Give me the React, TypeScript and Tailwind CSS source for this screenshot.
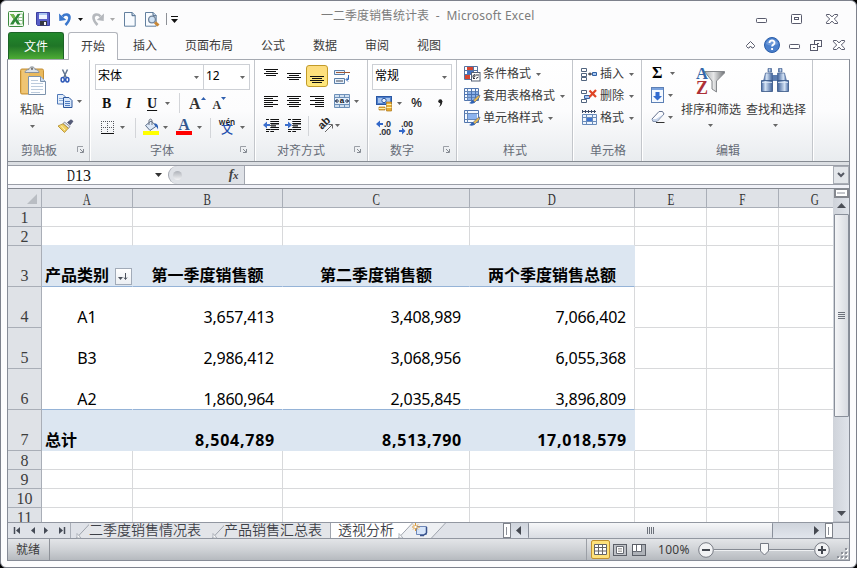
import React from "react";

const UI = "font-['Noto_Sans','Noto_Sans_CJK_SC',sans-serif]";
const SERIF = "font-['Liberation_Serif','Noto_Sans_CJK_SC',serif]";

type P = { className?: string };

function Svg({ w, h, className = "", children }: { w: number; h: number; className?: string; children: React.ReactNode }) {
  return (
    <svg width={w} height={h} viewBox={`0 0 ${w} ${h}`} fill="none" className={`block shrink-0 overflow-visible ${className}`}>
      {children}
    </svg>
  );
}

function Caret({ className = "", color = "#666" }: P & { color?: string }) {
  return (
    <Svg w={5} h={3} className={className}>
      <path d="M0 0h5L2.5 3z" fill={color} />
    </Svg>
  );
}

function Lines({ rows, w = 14, h = 14, className = "" }: P & { rows: [number, number, number][]; w?: number; h?: number }) {
  return (
    <Svg w={w} h={h} className={className}>
      {rows.map(([x, y, len], i) => (
        <rect key={i} x={x} y={y} width={len} height={1} fill="#111" />
      ))}
    </Svg>
  );
}

function Sep({ className = "" }: P) {
  return <div className={`h-[20px] w-px shrink-0 bg-[#d3d5d9] ${className}`} />;
}

function Launcher() {
  return (
    <Svg w={8} h={8}>
      <path d="M.5 6V.5H6" stroke="#9b9fa6" />
      <path d="M3 3l3 3M6.5 3v3.5H3" stroke="#858a92" />
    </Svg>
  );
}

function Group({ width, label, pad, launcher, children }: { width: string; label: string; pad: string; launcher?: string; children: React.ReactNode }) {
  return (
    <div className={`flex h-full shrink-0 flex-col border-r border-[#c3c6cb] pt-[4px] shadow-[1px_0_0_#fff] ${width}`}>
      <div className="h-[75px]">{children}</div>
      <div className={`flex h-[22px] items-center text-[12px] leading-[22px] text-[#666c77] ${pad}`}>
        <span className="mt-px shrink-0 whitespace-nowrap">{label}</span>
        {launcher && (
          <span className={launcher}>
            <Launcher />
          </span>
        )}
      </div>
    </div>
  );
}

/* ---------- quick access icons ---------- */

function ExcelLogo() {
  return (
    <Svg w={17} h={17} className="ml-[7px]">
      <rect x=".5" y=".5" width="15" height="15" rx="1" fill="#f4faf1" stroke="#3c8a3f" />
      <path d="M10.500 3h4v10h-4z" fill="#fff" stroke="#8fbf8a" strokeWidth=".8" />
      <path d="M10.500 6.500h4M10.500 9.500h4" stroke="#8fbf8a" />
      <path d="M2 3h3.500l2 3.300L9.500 3h3L9 8l3.500 5.500H9.300l-2-3.300-2 3.300H2l3.500-5.500z" fill="#2d8836" />
      <path d="M2 3h3.500l2 3.300-1.900 1.900z" fill="#73b84f" />
    </Svg>
  );
}

function Floppy() {
  return (
    <Svg w={14} h={14} className="ml-[7px]">
      <path d="M.5.5h13v13h-12l-1-1z" fill="#5a5fc8" stroke="#3b3f9e" />
      <path d="M3 1h8v6H3z" fill="#eef3ff" />
      <path d="M3 1h8v2H3z" fill="#a9c4f0" />
      <path d="M4 9h7v4.500H4z" fill="#35373f" />
      <path d="M8 10h2v3H8z" fill="#f2f2f5" />
    </Svg>
  );
}

function Undo({ color, flip, className = "" }: P & { color: string; flip?: boolean }) {
  return (
    <Svg w={13} h={14} className={`${flip ? "-scale-x-100" : ""} ${className}`}>
      <path d="M3.500 4.500C6 1.500 10.800 2 10.500 6c-.2 3-1.500 4.500-4 7" stroke={color} strokeWidth="2.600" />
      <path d="M0 1.500l.3 7.500 7-1z" fill={color} />
    </Svg>
  );
}

function Page({ lens, className = "" }: P & { lens?: boolean }) {
  return (
    <Svg w={16} h={15} className={className}>
      <path d="M.5.5h7.700l3 3v10.700H.5z" fill="#f8fbff" stroke="#63809f" />
      <path d="M8 .5v3.200h3.300" fill="#c5d7ea" stroke="#4a6888" />
      {lens && (
        <>
          <circle cx="7" cy="7.500" r="3.400" fill="#cfe2f5" stroke="#71849b" strokeWidth="1.300" />
          <path d="M10 10.300l3.500 3.200" stroke="#c98735" strokeWidth="3" />
        </>
      )}
    </Svg>
  );
}

/* ---------- window controls ---------- */

function MinIcon({ className = "" }: P) {
  return (
    <Svg w={11} h={5} className={className}>
      <rect x=".5" y=".5" width="10" height="4" rx=".8" fill="#fff" stroke="#585a6c" />
    </Svg>
  );
}

function CloseIcon({ className = "" }: P) {
  return (
    <Svg w={12} h={10} className={className}>
      <path d="M.5.5h3L6 2.800 8.500.5h3v1.300L8.300 5l3.200 3.200v1.300h-3L6 7.200 3.500 9.500h-3V8.200L3.700 5 .5 1.800z" fill="#fff" stroke="#585a6c" />
    </Svg>
  );
}

/* ---------- ribbon icons ---------- */

function PasteIcon() {
  return (
    <Svg w={27} h={31} className="ml-[12px]">
      <rect x=".5" y="4" width="23" height="25" rx="1.500" fill="#e9b95d" stroke="#c48f35" />
      <path d="M2 5h7v23H2z" fill="#f3cd83" opacity=".6" />
      <path d="M5 7.500c0-2 2-3 4-3C9 1 15 1 15 4.500c2 0 4 1 4 3z" fill="#dce2e8" stroke="#8a929c" />
      <circle cx="12" cy="3.700" r="1.200" fill="#777" />
      <path d="M8.500 11.500h12l5 5v13h-17z" fill="#fdfeff" stroke="#7d93ad" />
      <path d="M20.500 11.500v5h5" fill="#cadaea" stroke="#7d93ad" />
      <path d="M11 15.500h7M11 18.500h12M11 21.500h12M11 24.500h12M11 27.500h9" stroke="#bccbdc" />
    </Svg>
  );
}

function CutIcon() {
  return (
    <Svg w={11} h={14}>
      <path d="M2.500.5L6.500 9M7.500.5L3.500 9" stroke="#60748f" strokeWidth="1.500" />
      <ellipse cx="2.700" cy="10.700" rx="1.600" ry="2.200" stroke="#2e59b8" strokeWidth="1.500" />
      <ellipse cx="7.300" cy="10.700" rx="1.600" ry="2.200" stroke="#2e59b8" strokeWidth="1.500" />
    </Svg>
  );
}

function CopyIcon() {
  return (
    <Svg w={16} h={14}>
      <path d="M.5.5H6l2.500 2.500v7h-8z" fill="#e5effb" stroke="#4f78b8" />
      <path d="M2 4.500h4M2 6.500h4" stroke="#87a8d6" />
      <path d="M6.500 3.500H12L15 6.500v7H6.500z" fill="#d8e7fa" stroke="#2b559b" />
      <path d="M8 7.500h5M8 9.500h5M8 11.500h5" stroke="#4f7cc1" />
    </Svg>
  );
}

function BrushIcon() {
  return (
    <Svg w={17} h={14}>
      <path d="M10.500 3.500L14 .8l2 1.500-2.800 3.500z" fill="#555c79" stroke="#3c4260" strokeWidth=".7" />
      <path d="M7.500 3l5.500 4.500-1.500 1.800L6 4.800z" fill="#e1e2e8" stroke="#777b88" strokeWidth=".8" />
      <path d="M6 4.800l5.300 4.400L7.500 13.500 1 7z" fill="#f0cf63" stroke="#b08a25" strokeWidth=".8" />
      <path d="M4 6.500l4 4.500" stroke="#fff3bb" />
    </Svg>
  );
}

function BordersIcon() {
  return (
    <Svg w={14} h={14} className="ml-[11px]">
      <path d="M.5 0v12M6.500 0v12M12.500 0v12M0 .5h13M0 6.500h13" stroke="#55585f" strokeDasharray="1 1" />
      <path d="M0 12.500h13" stroke="#111" />
    </Svg>
  );
}

function BucketIcon() {
  return (
    <Svg w={17} h={17} className="-mt-px ml-[7px]">
      <path d="M2.500 6.500L8 2l5.500 5L7 11.500z" fill="#dce8f7" stroke="#5b6e89" />
      <path d="M6 6V2c0-2.500 3-2.500 3 0v4" stroke="#6a7382" />
      <path d="M11 4.500c3.500-.5 4.500 2 4 6-1-2-1.500-3-3-3.500z" fill="#2e62b7" />
      <rect y="12" width="16" height="4" fill="#ff0" />
    </Svg>
  );
}

function WrapIcon() {
  return (
    <Svg w={17} h={17} className="ml-[6px]">
      <path d="M.5 1.500h10v4H.5zM.5 9.500h10v5H.5z" fill="#e7f0fb" stroke="#5b7fa8" />
      <path d="M2 3.500h14" stroke="#a25a38" strokeWidth="1.200" />
      <path d="M2 12h7" stroke="#444a58" strokeWidth="1.200" />
      <path d="M14.500 6v4.500H12.500M14 8.500l-2 2 2 2" stroke="#2f63b5" />
    </Svg>
  );
}

function MergeIcon() {
  return (
    <Svg w={17} h={15} className="ml-[10px]">
      <path d="M.5.5h15v13H.5zM.5 3.500h15M.5 10.500h15M5.500.5v3M10.500.5v3M5.500 10.500v3M10.500 10.500v3" fill="#cfdff0" stroke="#6d90b9" />
      <rect x="1" y="4" width="14" height="6" fill="#e4effb" />
      <path d="M1 7h4M15 7h-4M3.500 5L1.500 7l2 2M12.500 5l2 2-2 2" stroke="#1b2742" />
      <text x="5.700" y="9.300" fontSize="8" fontWeight="bold" fill="#111" fontFamily="Liberation Sans">a</text>
    </Svg>
  );
}

function IndentIcon({ right, className = "" }: P & { right?: boolean }) {
  return (
    <Svg w={16} h={13} className={className}>
      <path d="M3 .5h3M8 .5h8M8 2.500h8M8 8.500h8M3 10.500h13M3 12.500h3M8 12.500h3" stroke="#111" />
      <path d="M8 4h8v1.500H8zM8 6.200h5v1.300H8z" fill="#111" />
      <path d="M7.500 0v13" stroke="#555" strokeDasharray="1 1" />
      {right ? <path d="M0 5h3V2.500L7 6 3 9.500V7H0z" fill="#3b6fce" /> : <path d="M7 5H4V2.500L0 6l4 3.500V7h3z" fill="#3b6fce" />}
    </Svg>
  );
}

function OrientIcon() {
  return (
    <Svg w={16} h={15} className="ml-[9px]">
      <text x="0" y="0" fontSize="11" fontWeight="bold" fill="#222" fontFamily="Liberation Sans" transform="translate(4 12) rotate(-45)">ab</text>
      <path d="M7 14l7-7M10.500 6.500H14.500v4" stroke="#666" />
    </Svg>
  );
}

function MoneyIcon() {
  return (
    <Svg w={17} h={17} className="ml-[8px]">
      <rect x=".5" y="1.500" width="15" height="8" fill="#4f7fcb" stroke="#2a57a3" />
      <rect x="2" y="3" width="12" height="5" fill="#a7c4ee" />
      <circle cx="8" cy="5.500" r="2.200" fill="#e8f0fb" stroke="#2a57a3" />
      <path d="M10.500 7h5v9h-5zM3 12h6v3H3z" fill="#e9ad35" stroke="#ac771b" strokeWidth=".7" />
      <path d="M10.500 9.500h5M10.500 12.500h5M3 13.500h6" stroke="#fff0a5" />
    </Svg>
  );
}

function DecimalIcon({ inc, className = "" }: P & { inc?: boolean }) {
  return (
    <Svg w={17} h={15} className={className}>
      <g fontSize="9" fontWeight="bold" fontFamily="Liberation Sans" fill="#30343b">
        {inc ? (
          <>
            <text x="8" y="7" textLength="7">.0</text>
            <text x="3" y="14.500" textLength="12">.00</text>
          </>
        ) : (
          <>
            <text x="2" y="7" textLength="12">.00</text>
            <text x="7" y="14.500" textLength="7">.0</text>
          </>
        )}
      </g>
      {inc ? (
        <path d="M7 3H4V.5L0 4l4 3.500V5h3z" fill="#3267c9" />
      ) : (
        <path d="M0 10h3V7.500L6.500 11 3 14.500V12H0z" fill="#3267c9" />
      )}
    </Svg>
  );
}

function CondIcon() {
  return (
    <Svg w={17} h={16}>
      <path d="M.5.500h13v13H.5zM.5 4.500h13M.5 8.500h13M4.500.5v13M9.500.5v13" fill="#fff" stroke="#5773a0" />
      <path d="M3 1h6v3H3zM1 9h5v4H1z" fill="#d8442f" />
      <path d="M3 5h6v3H3z" fill="#3f72c8" />
      <rect x="7.500" y="6.500" width="8.500" height="8.500" fill="#fff" stroke="#556075" />
      <path d="M9 9.500l2-1v2l-2 1zM12 9h3M9 12.500h2M12 12.500l2.500-1.500" stroke="#30343e" />
    </Svg>
  );
}

function TableIcon({ single }: { single?: boolean }) {
  return (
    <Svg w={17} h={16}>
      <path d="M.5.5h14v12H.5z" fill="#f4f9ff" stroke="#5175ae" />
      {single ? <path d="M4 4h9v5H4z" fill="#8db4ee" /> : <path d="M4 4h10v8H4z" fill="#8bb0e7" />}
      <path d="M.5 3.500h14M.5 9.500h14M3.500.5v12" stroke="#6787b6" />
      {!single && <path d="M.5 6.500h14M7.500.5v12M11.500.5v12" stroke="#4a72b2" />}
      <path d="M8 13.500l5.500-5.500 2.500-1-1 3-4.500 4.500z" fill="#e6b951" stroke="#59698a" strokeWidth=".7" />
      <path d="M5 15c2-.2 2-2.500 4-3l2 2c-1 2-4 2-6 1z" fill="#2e62b5" />
    </Svg>
  );
}

function CellIcon({ kind }: { kind: "insert" | "delete" | "format" }) {
  if (kind === "format")
    return (
      <Svg w={17} h={16}>
        <path d="M1 1.500h14M1.500 0v3M4.500 0v3M7.500 0v3M10.500 0v3M13.500 0v3" stroke="#3d4c68" />
        <path d="M1.500 4.500h14v10h-14zM1.500 7.500h14M1.500 11.500h14M5.500 4.500v10M11.500 4.500v10" fill="#eef5fe" stroke="#688ab9" />
        <path d="M6 8h5v3H6z" fill="#3e75d2" />
      </Svg>
    );
  return (
    <Svg w={17} h={16}>
      <path d="M.5 2.500h5v3h-5zM.5 11.500h5v3h-5z" fill="#fff" stroke="#51647f" />
      {kind === "insert" ? (
        <>
          <path d="M.5 7.500h5v3h-5z" fill="#fff" stroke="#51647f" />
          <path d="M11.500 6.500h4v3h-4z" fill="#a9c9f3" stroke="#3160a3" />
          <path d="M7 8h4M9 6.500V9.500" stroke="#1a1d26" />
        </>
      ) : (
        <>
          <path d="M3.500 7.500h5v3h-5z" fill="#a8c8f4" stroke="#3b62a0" />
          <path d="M8.500 2.500l6.500 6.500M15 2L8.500 9" stroke="#df4527" strokeWidth="2.200" />
        </>
      )}
    </Svg>
  );
}

function FillDown() {
  return (
    <Svg w={14} h={17} className="ml-[9px]">
      <rect x=".5" y=".5" width="12" height="15" fill="#f4f9ff" stroke="#5d80b5" />
      <path d="M1 1h11v2H1z" fill="#7ba3de" />
      <path d="M4.500 5h4v4H11l-4.500 4.500L2 9h2.500z" fill="#326bd0" />
    </Svg>
  );
}

function Eraser() {
  return (
    <Svg w={15} h={14} className="ml-[9px]">
      <path d="M1 9l7-7.500h3.500L13 4l-7 7.500H2z" fill="#fbfcff" stroke="#66738f" />
      <path d="M1 9h4l8-5-7 7.500H2z" fill="#b9c9e3" opacity=".8" />
      <path d="M5 12.500h8.500" stroke="#333" />
    </Svg>
  );
}

function SortIcon() {
  return (
    <Svg w={32} h={30} className="mx-auto">
      <defs>
        <linearGradient id="fn" x1="0" x2="1">
          <stop stopColor="#a6a9ac" />
          <stop offset=".45" stopColor="#e6e7e8" />
          <stop offset="1" stopColor="#6f7275" />
        </linearGradient>
      </defs>
      <path d="M9.500 5.500h20v1.500L21.500 15v11l-4.500-3V15z" fill="url(#fn)" stroke="#85888c" />
      <text x="1" y="13" fontSize="17" fontWeight="bold" fill="#3366a9" fontFamily="Liberation Serif" textLength="12" lengthAdjust="spacingAndGlyphs">A</text>
      <text x="1" y="28" fontSize="18" fontWeight="bold" fill="#ad3037" fontFamily="Liberation Serif" textLength="12" lengthAdjust="spacingAndGlyphs">Z</text>
    </Svg>
  );
}

function Barrel() {
  return (
    <>
      <path d="M7 .5h3.500V4H7z" fill="url(#bn)" stroke="#4a6797" strokeWidth=".7" />
      <path d="M4.500 5h7v8h-9z" fill="url(#bn)" stroke="#4a6797" strokeWidth=".7" />
      <path d="M.5 12.500h11v11H.5z" fill="url(#bn)" stroke="#345383" strokeWidth=".8" />
      <path d="M1 14.500h10" stroke="#dfeaf7" opacity=".8" />
    </>
  );
}

function Binoculars() {
  return (
    <Svg w={28} h={26} className="mx-auto">
      <defs>
        <linearGradient id="bn" x1="0" x2="1">
          <stop stopColor="#466aa5" />
          <stop offset=".35" stopColor="#d3e2f4" />
          <stop offset="1" stopColor="#3c5f98" />
        </linearGradient>
      </defs>
      <path d="M11 7h6v6h-6z" fill="#5c7db0" />
      <Barrel />
      <g transform="translate(28 0) scale(-1 1)">
        <Barrel />
      </g>
    </Svg>
  );
}

/* ---------- sections ---------- */

function TitleBar() {
  return (
    <div className="flex h-[31px] shrink-0">
      <div className="flex h-[36px] w-[320px] shrink-0 items-center">
        <ExcelLogo />
        <div className="ml-[3px] h-[12px] w-px bg-[#a0a3a8]" />
        <Floppy />
        <Undo color="#3c78cd" className="ml-[9px]" />
        <Caret className="ml-[6px]" color="#111" />
        <Undo color="#b5b8bd" flip className="ml-[8px]" />
        <Caret className="ml-[6px]" color="#aaa" />
        <Page className="ml-[9px]" />
        <Page lens className="ml-[5px]" />
        <div className="ml-[5px] h-[12px] w-px bg-[#8d9096]" />
        <Svg w={7} h={7} className="ml-[4px]">
          <path d="M0 3h7L3.500 7z" fill="#111" />
          <path d="M0 .5h7" stroke="#111" />
        </Svg>
      </div>
      <div className="w-[216px] whitespace-nowrap text-[12px] leading-[30px] text-[#7c7c7c]">
        一二季度销售统计表<span className="tracking-[0.22px]">&nbsp; - &nbsp;Microsoft Excel</span>
      </div>
      <div className="ml-[219px] flex h-[36px] items-center">
        <MinIcon className="mt-[3px]" />
        <Svg w={12} h={10} className="ml-[24px]">
          <rect x=".5" y=".5" width="10" height="9" rx=".8" fill="#fff" stroke="#585a6c" />
          <rect x="3.500" y="3.500" width="4" height="2" stroke="#585a6c" />
        </Svg>
        <CloseIcon className="ml-[23px]" />
      </div>
    </div>
  );
}

function TabRow() {
  return (
    <div className="flex h-[27px] shrink-0 text-[12px] leading-[28px] text-[#3b3b3b]">
      <div className="ml-[7px] h-[27px] w-[56px] shrink-0 rounded-t-[3px] border border-b-0 border-[#1c6327] bg-linear-to-b from-[#238a2c] via-[#1f7527] to-[#4dac35] text-center leading-[27px] text-white">
        文件
      </div>
      <div className="relative z-10 ml-[4px] h-[28px] w-[50px] shrink-0 rounded-t-[3px] border border-b-0 border-[#b2b5bc] bg-white text-center leading-[27px]">开始</div>
      <div className="ml-[15px] flex w-[613px]">
        <span className="mr-[28px]">插入</span>
        <span className="mr-[28px]">页面布局</span>
        <span className="mr-[28px]">公式</span>
        <span className="mr-[28px]">数据</span>
        <span className="mr-[28px]">审阅</span>
        <span>视图</span>
      </div>
      <div className="flex h-[26px] items-center">
        <Svg w={9} h={8}>
          <path d="M.5 5.500v-1l4-4 4 4v1l-1.500 1.500h-1L4.500 5 3 7H2z" fill="#fff" stroke="#585a6c" />
        </Svg>
        <Svg w={16} h={16} className="ml-[9px]">
          <circle cx="8" cy="8" r="7.500" fill="#4b80cc" stroke="#2a5da9" />
          <path d="M2 7c1-6 11-6 12 0-4 2-8 2-12 0" fill="#85aae0" opacity=".6" />
          <path d="M5.500 6c0-3.500 5.200-3.200 5 0-.1 1.600-2.400 1.700-2.400 3.400M8.100 11v2" stroke="#fff" strokeWidth="1.900" />
        </Svg>
        <MinIcon className="ml-[9px] mt-[3px]" />
        <Svg w={12} h={11} className="ml-[10px]">
          <rect x="4.500" y=".5" width="7" height="6" fill="#fff" stroke="#585a6c" />
          <rect x=".5" y="4.500" width="7" height="6" fill="#fff" stroke="#585a6c" />
          <rect x="3" y="7" width="2" height="1" fill="#585a6c" />
          <rect x="7" y="3" width="2" height="1" fill="#585a6c" />
        </Svg>
        <CloseIcon className="ml-[11px]" />
      </div>
    </div>
  );
}

function ClipboardGroup() {
  return (
    <Group width="w-[82px]" label="剪贴板" pad="pl-[13px]" launcher="ml-[20px]">
      <div className="flex">
        <div className="w-[44px]">
          <div className="h-[34px] pt-[1px]">
            <PasteIcon />
          </div>
          <div className="pl-[12px] pt-px text-[12px] leading-[22px]">粘贴</div>
          <Caret className="ml-[22px] mt-[4px]" />
        </div>
        <div className="pl-[5px] pt-[5px]">
          <div className="flex h-[14px] items-center pl-[3px]">
            <CutIcon />
          </div>
          <div className="mt-[11px] flex h-[14px] items-center gap-[4px]">
            <CopyIcon />
            <Caret />
          </div>
          <div className="mt-[11px]">
            <BrushIcon />
          </div>
        </div>
      </div>
    </Group>
  );
}

function Combo({ width, text }: { width: string; text: string }) {
  return (
    <div className={`flex h-[26px] shrink-0 items-center justify-between border border-[#cdd0d5] bg-white pl-[2px] pr-[4px] text-[12px] text-black ${width}`}>
      <span className="-mt-[2px]">{text}</span>
      <Caret />
    </div>
  );
}

function FontGroup() {
  return (
    <Group width="w-[165px]" label="字体" pad="pl-[60px]" launcher="ml-[66px]">
      <div className="flex pl-[5px]">
        <Combo width="w-[109px]" text="宋体" />
        <div className="-ml-px">
          <Combo width="w-[47px]" text="12" />
        </div>
      </div>
      <div className={`flex h-[26px] items-center text-[14px] font-bold text-[#111] ${SERIF}`}>
        <span className="ml-[12px] w-[23px]">B</span>
        <span className="w-[22px] pl-[1px] italic">I</span>
        <span className="w-[18px] underline underline-offset-2">U</span>
        <Caret />
        <Sep className="ml-[9px]" />
        <span className="ml-[9px] mt-[2px] text-[16px] leading-none text-[#333]">A</span>
        <Svg w={5} h={3} className="mb-[10px]">
          <path d="M0 3h5L2.500 0z" fill="#2e5fae" />
        </Svg>
        <span className="ml-[7px] mt-[4px] text-[12px] leading-none text-[#333]">A</span>
        <Svg w={5} h={3} className="mb-[10px]">
          <path d="M0 0h5L2.500 3z" fill="#2e5fae" />
        </Svg>
      </div>
      <div className="flex h-[23px] items-center">
        <BordersIcon />
        <Caret className="ml-[5px]" />
        <Sep className="ml-[10px]" />
        <BucketIcon />
        <Caret className="ml-[3px]" />
        <div className={`-mt-[2px] ml-[8px] h-[17px] w-[16px] border-b-4 border-[#f00] text-center text-[16px] font-bold leading-[13px] text-[#34578f] ${SERIF}`}>A</div>
        <Caret className="ml-[5px]" />
        <Sep className="ml-[8px]" />
        <div className="ml-[7px] w-[18px] text-center">
          <div className="text-[8px] font-semibold leading-[5px] text-[#222]">wén</div>
          <div className="text-[12px] font-medium leading-[12px] text-[#244fae]">文</div>
        </div>
        <Caret className="ml-[4px]" />
      </div>
    </Group>
  );
}

function AlignGroup() {
  return (
    <Group width="w-[113px]" label="对齐方式" pad="pl-[22px]" launcher="ml-[29px]">
      <div className="flex h-[26px] items-center">
        <Lines className="mb-[8px] ml-[9px]" h={8} rows={[[0, 0, 14], [2, 2, 10], [0, 4, 14], [2, 6, 10]]} />
        <Lines className="ml-[9px]" h={8} rows={[[0, 0, 14], [2, 2, 10], [0, 4, 14], [2, 6, 10]]} />
        <div className="ml-[5px] mb-[2px] flex h-[22px] w-[22px] shrink-0 items-end rounded-[3px] border border-[#c29b29] bg-linear-to-b from-[#fddc7e] to-[#ffe87b] pb-[3px] pl-[3px]">
          <Lines h={7} rows={[[0, 0, 14], [2, 2, 10], [0, 4, 14], [2, 6, 10]]} />
        </div>
        <WrapIcon />
      </div>
      <div className="flex h-[22px] items-center">
        <Lines className="ml-[9px]" h={11} rows={[[0, 0, 14], [0, 2, 9], [0, 4, 14], [0, 6, 9], [0, 8, 14], [0, 10, 9]]} />
        <Lines className="ml-[9px]" h={11} rows={[[0, 0, 14], [2, 2, 10], [0, 4, 14], [2, 6, 10], [0, 8, 14], [2, 10, 10]]} />
        <Lines className="ml-[9px]" h={11} rows={[[0, 0, 14], [5, 2, 9], [0, 4, 14], [5, 6, 9], [0, 8, 14], [5, 10, 9]]} />
        <MergeIcon />
        <Caret className="ml-[3px]" />
      </div>
      <div className="flex h-[27px] items-center">
        <IndentIcon className="ml-[8px]" />
        <IndentIcon right className="ml-[6px]" />
        <Sep className="ml-[7px]" />
        <OrientIcon />
        <Caret className="ml-px" />
      </div>
    </Group>
  );
}

function NumberGroup() {
  return (
    <Group width="w-[89px]" label="数字" pad="pl-[22px]" launcher="ml-[29px]">
      <div className="pl-[4px]">
        <Combo width="w-[80px]" text="常规" />
      </div>
      <div className="flex h-[26px] items-center">
        <MoneyIcon />
        <Caret className="ml-[4px]" />
        <span className="ml-[9px] w-[27px] text-[13px] font-medium text-[#222]">%</span>
        <Svg w={5} h={9}>
          <circle cx="2.300" cy="2.300" r="2" fill="#222" />
          <path d="M4.300 2.300c0 3-1 4.500-3.300 5.700 1-1.500 1.400-2.700 1.200-4z" fill="#222" />
        </Svg>
      </div>
      <div className="flex h-[23px] items-center pb-px">
        <DecimalIcon inc className="ml-[8px]" />
        <DecimalIcon className="ml-[6px]" />
      </div>
    </Group>
  );
}

function MenuLine({ icon, text }: { icon: React.ReactNode; text: string }) {
  return (
    <div className="flex h-[22px] items-center text-[12px]">
      <div className="w-[19px]">{icon}</div>
      <span className="whitespace-nowrap">{text}</span>
      <Caret className="ml-[5px]" />
    </div>
  );
}

function EditGroup() {
  return (
    <Group width="w-[171px]" label="编辑" pad="pl-[74px]">
      <div className="flex">
        <div className="w-[38px]">
          <div className="flex h-[18px] items-center">
            <span className={`ml-[10px] w-[18px] text-[16px] font-bold leading-[18px] text-black ${SERIF}`}>Σ</span>
            <Caret />
          </div>
          <div className="mt-[4px] flex h-[18px] items-center">
            <FillDown />
            <Caret className="ml-[3px]" />
          </div>
          <div className="mt-[4px] flex h-[18px] items-center">
            <Eraser />
            <Caret className="ml-[2px]" />
          </div>
        </div>
        <div className="w-[62px]">
          <div className="h-[34px] pt-[2px]">
            <SortIcon />
          </div>
          <div className="pl-px pt-px text-[12px] leading-[21px]">排序和筛选</div>
          <Caret className="ml-[28px] mt-[4px]" />
        </div>
        <div className="w-[65px]">
          <div className="h-[34px] pt-[4px]">
            <Binoculars />
          </div>
          <div className="pl-[4px] pt-px text-[12px] leading-[21px]">查找和选择</div>
          <Caret className="ml-[31px] mt-[4px]" />
        </div>
      </div>
    </Group>
  );
}

function Ribbon() {
  return (
    <div className="flex h-[101px] shrink-0 bg-linear-to-b from-white via-[#fcfcfd] via-50% to-[#e9ecef] text-[#3b3b3b]">
      <ClipboardGroup />
      <FontGroup />
      <AlignGroup />
      <NumberGroup />
      <Group width="w-[116px]" label="样式" pad="pl-[46px]">
        <div className="-mt-px pl-[7px]">
          <MenuLine icon={<CondIcon />} text="条件格式" />
          <MenuLine icon={<TableIcon />} text="套用表格格式" />
          <MenuLine icon={<TableIcon single />} text="单元格样式" />
        </div>
      </Group>
      <Group width="w-[69px]" label="单元格" pad="pl-[17px]">
        <div className="-mt-px pl-[8px]">
          <MenuLine icon={<CellIcon kind="insert" />} text="插入" />
          <MenuLine icon={<CellIcon kind="delete" />} text="删除" />
          <MenuLine icon={<CellIcon kind="format" />} text="格式" />
        </div>
      </Group>
      <EditGroup />
    </div>
  );
}

function FormulaBar() {
  return (
    <div className="flex h-[20px] shrink-0 border-y border-[#9b9fa8] bg-white">
      <div className={`flex w-[160px] items-center pl-[59px] text-[16px] leading-[18px] text-[#111] ${SERIF}`}>
        <span className="inline-block w-[8px] pt-[2px]">
          <span className="inline-block origin-left scale-x-[0.68]">D</span>
        </span>
        <span className="w-[80px] pt-[2px]">13</span>
        <Svg w={7} h={4}>
          <path d="M0 0h7L3.500 4z" fill="#333" />
        </Svg>
      </div>
      <div className="flex w-[77px] items-center justify-between rounded-l-full border-l border-r border-[#a3a7b0] bg-[#dfe2e7] pl-[4px] pr-[6px]">
        <div className="h-[9px] w-[9px] rounded-full bg-linear-to-b from-[#aeb2b9] to-[#f3f4f6]" />
        <span className={`text-[14px] font-bold italic leading-[16px] tracking-[-0.5px] text-[#444] ${SERIF}`}>
          f<span className="text-[11px]">x</span>
        </span>
      </div>
      <div className="flex-1 bg-white" />
      <div className="flex w-[16px] items-center justify-center border border-[#a9adb5] bg-[#e3e6ea]">
        <Svg w={8} h={6}>
          <path d="M1 1l3 3 3-3" stroke="#555963" strokeWidth="2" />
        </Svg>
      </div>
    </div>
  );
}

const COLS = [
  { name: "A", w: "w-[91px]" },
  { name: "B", w: "w-[150px]" },
  { name: "C", w: "w-[187px]" },
  { name: "D", w: "w-[165px]" },
  { name: "E", w: "w-[72px]" },
  { name: "F", w: "w-[72px]" },
  { name: "G", w: "w-[72px]" },
];

type Kind = "plain" | "before" | "head" | "data" | "last" | "total";

const ROWS: { n: number; h: string; kind: Kind; cells?: string[] }[] = [
  { n: 1, h: "h-[19px]", kind: "plain" },
  { n: 2, h: "h-[19px]", kind: "before" },
  { n: 3, h: "h-[41px]", kind: "head", cells: ["产品类别", "第一季度销售额", "第二季度销售额", "两个季度销售总额"] },
  { n: 4, h: "h-[41px]", kind: "data", cells: ["A1", "3,657,413", "3,408,989", "7,066,402"] },
  { n: 5, h: "h-[41px]", kind: "data", cells: ["B3", "2,986,412", "3,068,956", "6,055,368"] },
  { n: 6, h: "h-[41px]", kind: "last", cells: ["A2", "1,860,964", "2,035,845", "3,896,809"] },
  { n: 7, h: "h-[41px]", kind: "total", cells: ["总计", "8,504,789", "8,513,790", "17,018,579"] },
  { n: 8, h: "h-[19px]", kind: "plain" },
  { n: 9, h: "h-[19px]", kind: "plain" },
  { n: 10, h: "h-[19px]", kind: "plain" },
  { n: 11, h: "h-[19px]", kind: "plain" },
];

function cellStyle(kind: Kind, c: number) {
  if (c > 3) return "border-[#d8d9db]";
  const lastCol = c === 3 ? "border-r-[#d8d9db]" : "border-r-white";
  switch (kind) {
    case "before":
      return "border-r-[#d8d9db] border-b-[#dce6f1]";
    case "head":
      return "bg-[#dce6f1] border-r-[#dce6f1] border-b-[#95b3d7] font-bold leading-[22px]";
    case "data":
      return `border-b-white leading-[20px] ${lastCol}`;
    case "last":
      return `border-b-[#95b3d7] leading-[20px] ${lastCol}`;
    case "total":
      return "bg-[#dce6f1] border-[#dce6f1] font-bold leading-[20px]";
    default:
      return "border-[#d8d9db]";
  }
}

function cellAlign(kind: Kind, c: number) {
  if (kind === "head") return c === 0 ? "justify-start pl-[3px]" : "justify-center";
  if (c === 0) return kind === "total" ? "justify-start pl-[3px]" : "justify-center";
  return kind === "total" ? "justify-end pr-[7px] tracking-[0.75px]" : "justify-end pr-[8px] tracking-[-0.25px]";
}

function Sheet() {
  return (
    <div className="h-[333px] w-[825px] shrink-0 overflow-hidden bg-white">
      <div className={`flex h-[19px] w-[900px] bg-[#dfe2e7] text-[16px] leading-[21px] text-[#333] ${SERIF}`}>
        <div className="flex h-[19px] w-[34px] items-end justify-end border-b border-r border-[#a9aeb7] pb-[3px] pr-[4px]">
          <Svg w={10} h={10}>
            <path d="M10 0v10H0z" fill="#b9bdc3" />
          </Svg>
        </div>
        {COLS.map((c) => (
          <div key={c.name} className={`h-[19px] border-b border-r border-[#a9aeb7] text-center ${c.w}`}>
            <span className="inline-block scale-x-[0.7]">{c.name}</span>
          </div>
        ))}
      </div>
      {ROWS.map((r) => (
        <div key={r.n} className={`flex w-[900px] ${r.h}`}>
          <div
            className={`flex w-[34px] items-end justify-center border-b border-r border-[#a9aeb7] bg-[#dfe2e7] text-[16px] text-[#3d3d3d] ${
              r.h === "h-[41px]" ? "leading-[20px]" : "leading-[17px]"
            } ${SERIF}`}
          >
            {r.n}
          </div>
          {COLS.map((c, i) => (
            <div
              key={c.name}
              className={`flex items-end whitespace-nowrap border-b border-r text-[16px] text-black ${c.w} ${cellStyle(r.kind, i)} ${cellAlign(r.kind, i)}`}
            >
              {r.cells?.[i]}
              {r.kind === "head" && i === 0 && (
                <div className="mb-px ml-[6px] flex h-[17px] w-[17px] items-center justify-center border border-[#a2abb8] bg-linear-to-b from-white to-[#eceff3]">
                  <Svg w={11} h={9}>
                    <path d="M0 5h5L2.500 8z" fill="#4c525c" />
                    <path d="M7.500 1v6M6 5.500l1.500 2L9 5.500" stroke="#4c525c" />
                  </Svg>
                </div>
              )}
            </div>
          ))}
        </div>
      ))}
    </div>
  );
}

function VScroll() {
  return (
    <div className="flex h-[333px] w-[16px] shrink-0 flex-col items-center bg-linear-to-r from-[#cfd3da] to-[#dfe3ea]">
      <div className="flex h-[9px] w-[15px] shrink-0 items-center justify-center border-2 border-t border-[#85888f] bg-white">
        <div className="h-[2px] w-[8px] bg-[#c5c7cc]" />
      </div>
      <Svg w={9} h={5} className="mt-[5px]">
        <path d="M0 5h9L4.500 0z" fill="#4b4f57" />
      </Svg>
      <div className="mt-[6px] flex h-[203px] w-[15px] flex-col items-center justify-center gap-px rounded-[1px] border border-[#898f9a] bg-linear-to-r from-[#f4f5f7] to-[#d8dbe1]">
        {[0, 1, 2, 3].map((i) => (
          <div key={i} className="h-px w-[7px] bg-[#6c717b]" />
        ))}
      </div>
      <Svg w={9} h={5} className="mt-auto">
        <path d="M0 0h9L4.500 5z" fill="#4b4f57" />
      </Svg>
      <div className="mt-[5px] h-px w-full bg-[#c0c4cc]" />
    </div>
  );
}

function Slant({ left, right, className = "" }: P & { left: string; right: string }) {
  return (
    <Svg w={15} h={15} className={className}>
      <path d="M0 0h15v15H0z" fill={left} />
      <path d="M15 0L1 15h14z" fill={right} />
      <path d="M14.500 0L0.500 15" stroke="#9fa4ad" />
      <path d="M1 10.500V15h4z" fill="#fff" stroke="#9fa4ad" strokeWidth=".8" />
    </Svg>
  );
}

function SplitBox() {
  return (
    <div className="flex h-[15px] w-[8px] shrink-0 items-center justify-center border border-[#7f838b] bg-white">
      <div className="h-[8px] w-[2px] border-l border-[#8d9199]" />
    </div>
  );
}

function TabStrip() {
  return (
    <div className="flex h-[17px] shrink-0 border-b border-t border-[#9297a1] bg-[#dfe2e8] text-[14px] font-[350] leading-[14px] text-[#3d4047]">
      <div className="flex w-[63px] shrink-0 items-center border-r border-[#a9aeb7] pl-[6px]">
        <Svg w={7} h={7}><path d="M.5 0v7" stroke="#444a55" strokeWidth="1.500" /><path d="M6 0v7L2 3.500z" fill="#444a55" /></Svg>
        <Svg w={5} h={7} className="ml-[9px]"><path d="M5 0v7L1 3.500z" fill="#444a55" /></Svg>
        <Svg w={5} h={7} className="ml-[9px]"><path d="M0 0v7l4-3.500z" fill="#444a55" /></Svg>
        <Svg w={7} h={7} className="ml-[9px]"><path d="M6.500 0v7" stroke="#444a55" strokeWidth="1.500" /><path d="M1 0v7l4-3.500z" fill="#444a55" /></Svg>
      </div>
      <Slant left="#dfe2e8" right="#e3e5e9" className="ml-[5px]" />
      <div className="-ml-[2px] w-[123px] whitespace-nowrap bg-[#e3e5e9]">二季度销售情况表</div>
      <Slant left="#e3e5e9" right="#e3e5e9" />
      <div className="-ml-[3px] w-[107px] whitespace-nowrap border-r border-[#9fa4ad] bg-[#e3e5e9]">产品销售汇总表</div>
      <div className="w-[67px] whitespace-nowrap bg-white pl-[7px]">透视分析</div>
      <Slant left="#fff" right="#eef0f3" />
      <div className="w-[18px] bg-[#eef0f3]">
        <Svg w={17} h={14} className="-ml-px">
          <path d="M4.500 3.500h10v8h-10z" fill="#d6e5fa" stroke="#7088b8" />
          <path d="M8 12.500h4M14.500 10V4M12 12l2.500-2" stroke="#38528b" strokeWidth="1.500" />
          <path d="M3.500 0v8M0 4h8M1 1.500l5 5M6 1.500l-5 5" stroke="#df9931" />
          <circle cx="3.500" cy="4" r="1.200" fill="#fff" />
        </Svg>
      </div>
      <Svg w={15} h={15}>
        <path d="M0 0h14.500L.5 15H0z" fill="#eef0f3" />
        <path d="M14.500 0L.5 15" stroke="#9fa4ad" />
      </Svg>
      <div className="flex-1" />
      <SplitBox />
      <div className="flex w-[314px] shrink-0 items-center bg-linear-to-b from-[#cfd4dc] to-[#e1e5ec]">
        <Svg w={5} h={9} className="ml-[5px]"><path d="M5 0v9L0 4.500z" fill="#444850" /></Svg>
        <div className="ml-[7px] flex h-[15px] w-[245px] items-center justify-center gap-px rounded-[1px] border border-y-0 border-[#898f9a] bg-linear-to-b from-[#f6f7f9] to-[#d9dce2]">
          {[0, 1, 2, 3].map((i) => (
            <div key={i} className="h-[7px] w-px bg-[#6c717b]" />
          ))}
        </div>
        <Svg w={5} h={9} className="ml-[41px]"><path d="M0 0v9l5-4.500z" fill="#444850" /></Svg>
      </div>
      <SplitBox />
      <div className="w-[16px] shrink-0 bg-[#dfe2e8]" />
    </div>
  );
}

function ZoomKnob({ plus }: { plus?: boolean }) {
  return (
    <Svg w={16} h={16}>
      <circle cx="8" cy="8" r="7.300" fill="#f1f2f4" stroke="#777b84" />
      <path d={plus ? "M4 8h8M8 4v8" : "M4 8h8"} stroke="#444850" strokeWidth="2" />
    </Svg>
  );
}

function StatusBar() {
  return (
    <div className="flex h-[21px] shrink-0 items-center bg-linear-to-b from-[#e3e5e8] via-[#cfd2d6] to-[#b6babf] text-[12px] text-[#3b3b3b]">
      <div className="w-[41px] pl-[8px]">就绪</div>
      <div className="h-full w-px bg-[#8e9299]" />
      <div className="w-[537px]" />
      <div className="h-full w-px bg-[#9b9fa6]" />
      <div className="ml-[4px] flex h-[19px] w-[19px] items-center justify-center rounded-[2px] border border-[#c29230] bg-[#ffe27a]">
        <Svg w={13} h={11}>
          <path d="M.5.5h12v10H.5zM.5 3.500h12M.5 7h12M4.500.5v10M8.500.5v10" fill="#fff" stroke="#666" />
        </Svg>
      </div>
      <Svg w={14} h={12} className="ml-[3px]">
        <rect x=".5" y=".5" width="13" height="11" fill="#bfc2c7" stroke="#5b5f67" />
        <path d="M3.500 2.500h7v7h-7z" fill="#fff" stroke="#666a72" />
        <path d="M5 4.500h4M5 6h4M5 7.500h4" stroke="#888" strokeWidth=".7" />
      </Svg>
      <Svg w={14} h={12} className="ml-[5px]">
        <rect x=".5" y=".5" width="13" height="11" fill="#aeb2b8" stroke="#5b5f67" />
        <path d="M1 1h3v6H1zM5 1h4v6H5z" fill="#fff" />
        <path d="M4.500 1v6.500H1M9.500 1v6.500H5" stroke="#666a72" />
      </Svg>
      <span className="ml-[12px] w-[40px] shrink-0 tracking-[0.3px]">100%</span>
      <ZoomKnob />
      <Svg w={100} h={16}>
        <path d="M0 7.500h100" stroke="#858a93" />
        <path d="M0 8.500h100" stroke="#eef0f2" />
        <path d="M46.500 1.500h8v7.500l-4 4-4-4z" fill="#f6f7f8" stroke="#747983" />
      </Svg>
      <ZoomKnob plus />
      <Svg w={12} h={12} className="ml-[7px] mt-[8px]">
        {[[8, 0], [4, 4], [8, 4], [0, 8], [4, 8], [8, 8]].map(([x, y]) => (
          <g key={`${x}-${y}`}>
            <rect x={x + 1} y={y + 1} width="2" height="2" fill="#fff" />
            <rect x={x} y={y} width="2" height="2" fill="#8d9199" />
          </g>
        ))}
      </Svg>
    </div>
  );
}

export default function App() {
  return (
    <div className={`h-[568px] w-[857px] overflow-hidden bg-black ${UI}`}>
      <div className="flex h-[568px] w-[857px] flex-col overflow-hidden rounded-[6px] border border-[#7d818c] bg-[#fcfcfd]">
        <TitleBar />
        <TabRow />
        <div className="ml-[6px] flex h-[502px] w-[843px] shrink-0 flex-col overflow-hidden border border-[#868b96] border-t-[#a5a9b1]">
          <Ribbon />
          <div className="h-[4px] shrink-0 border-t border-[#868b92] bg-[#dcdfe3]" />
          <FormulaBar />
          <div className="h-[4px] shrink-0 border-b border-[#858991] bg-[#f1f2f8]" />
          <div className="flex h-[333px] shrink-0">
            <Sheet />
            <VScroll />
          </div>
          <TabStrip />
          <StatusBar />
        </div>
      </div>
    </div>
  );
}
